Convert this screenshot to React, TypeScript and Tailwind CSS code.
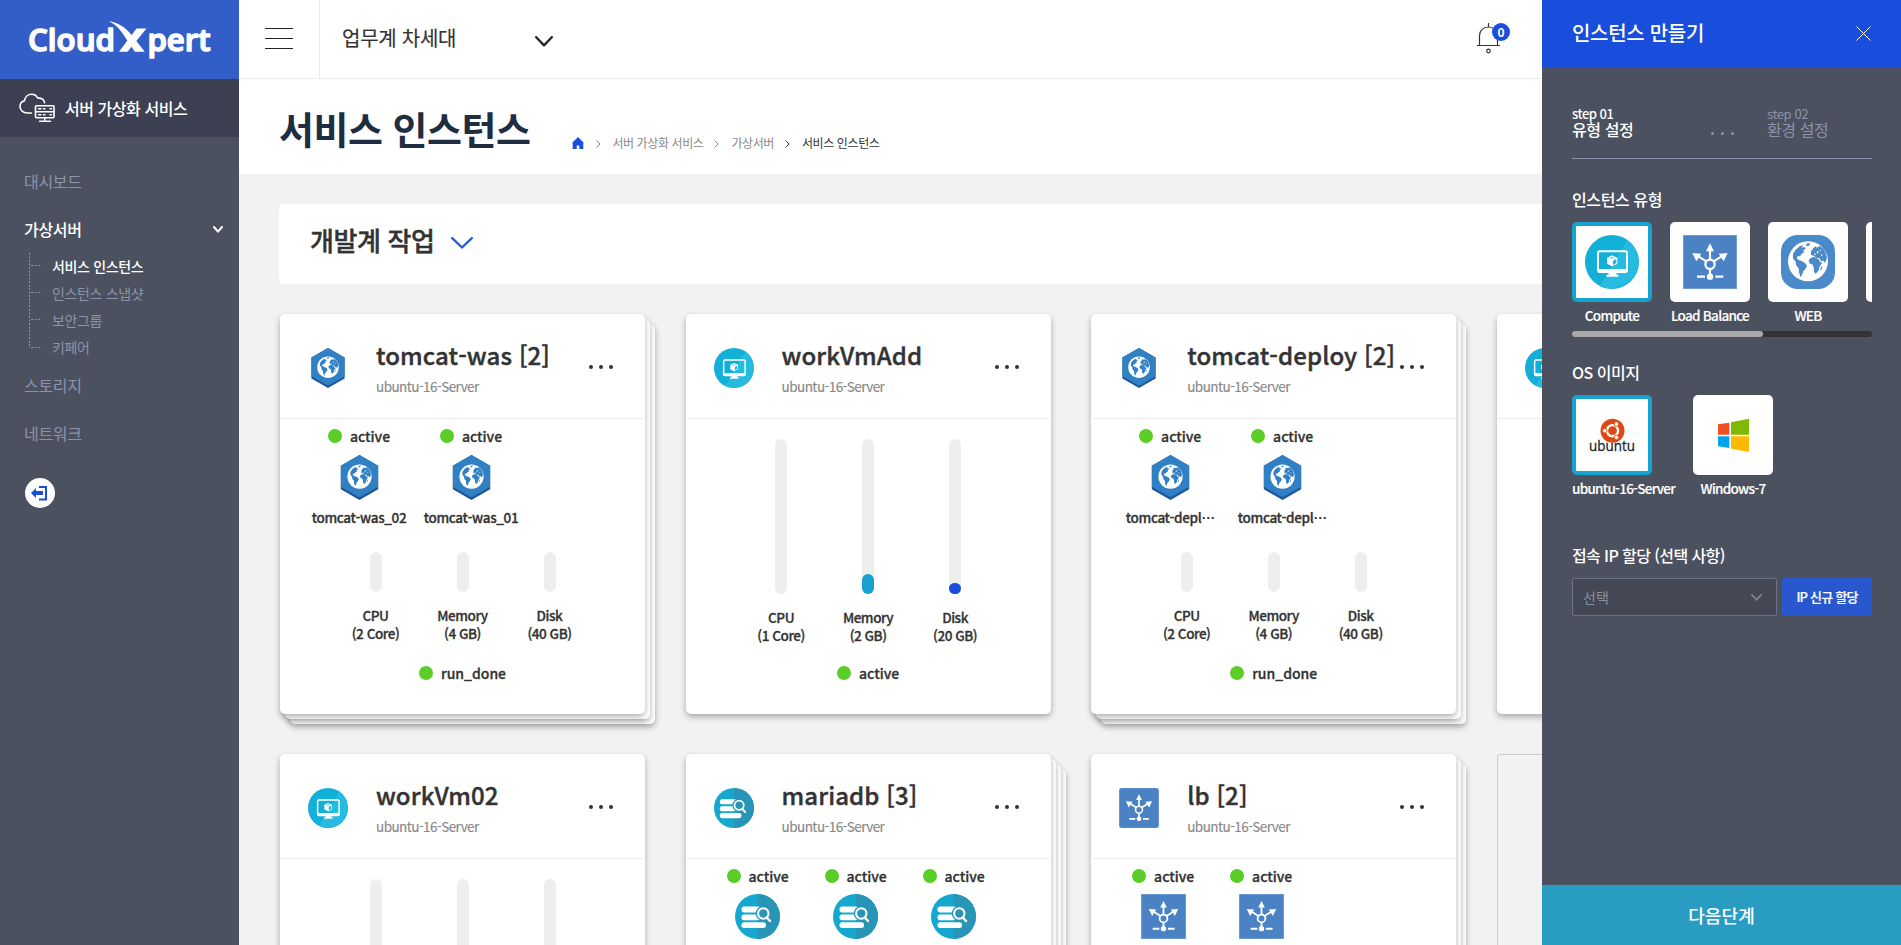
import React from "react";

type Kind = "was" | "compute" | "db" | "lb";

interface Member {
  label: string;
}

interface Instance {
  kind: Kind;
  name: string;
  stack: number;
  members?: Member[];
  memberWidth?: string;
  cpu: string;
  memory: string;
  disk: string;
  memoryUse?: number;
  diskUse?: number;
  status: string;
}

const instances: Instance[] = [
  { kind: "was", name: "tomcat-was [2]", stack: 2, memberWidth: "w-[94px]", members: [{ label: "tomcat-was_02" }, { label: "tomcat-was_01" }], cpu: "2 Core", memory: "4 GB", disk: "40 GB", status: "run_done" },
  { kind: "compute", name: "workVmAdd", stack: 0, cpu: "1 Core", memory: "2 GB", disk: "20 GB", memoryUse: 20, diskUse: 11, status: "active" },
  { kind: "was", name: "tomcat-deploy [2]", stack: 2, memberWidth: "w-[94px]", members: [{ label: "tomcat-depl⋯" }, { label: "tomcat-depl⋯" }], cpu: "2 Core", memory: "4 GB", disk: "40 GB", status: "run_done" },
  { kind: "compute", name: "workVm03", stack: 0, cpu: "1 Core", memory: "2 GB", disk: "20 GB", status: "active" },
  { kind: "compute", name: "workVm02", stack: 0, cpu: "1 Core", memory: "2 GB", disk: "20 GB", status: "active" },
  { kind: "db", name: "mariadb [3]", stack: 3, memberWidth: "w-20", members: [{ label: "mariadb_03" }, { label: "mariadb_02" }, { label: "mariadb_01" }], cpu: "2 Core", memory: "4 GB", disk: "40 GB", status: "run_done" },
  { kind: "lb", name: "lb [2]", stack: 2, memberWidth: "w-20", members: [{ label: "lb_02" }, { label: "lb_01" }], cpu: "2 Core", memory: "4 GB", disk: "40 GB", status: "run_done" },
];

function Continents({ color }: { color: string }) {
  return (
    <g fill={color}>
      <path d="M36 56 L44 44 L56 34 L66 30 L62 38 L70 36 L74 42 L66 46 L70 52 L62 56 L57 64 L50 64 L47 70 L53 75 L62 78 L72 84 L78 92 L74 101 L67 108 L63 120 L59 127 L54 112 L53 100 L45 90 L44 80 L36 70 Z" />
      <path d="M76 26 L88 24 L84 32 L76 34 Z" />
      <path d="M92 46 L98 38 L104 34 L108 38 L116 33 L126 40 L134 54 L138 70 L132 84 L126 76 L121 80 L116 70 L106 68 L98 62 L90 60 L90 52 Z" />
      <path d="M90 68 L100 66 L112 72 L118 82 L124 84 L116 94 L113 106 L104 116 L99 110 L98 96 L94 88 L86 86 L83 76 Z" />
      <path d="M120 96 L124 92 L122 104 L118 106 Z" />
    </g>
  );
}

function ContinentHoles({ color }: { color: string }) {
  return (
    <g fill={color}>
      <circle cx="110" cy="52" r="3" />
      <circle cx="122" cy="60" r="2.4" />
      <circle cx="102" cy="58" r="2.4" />
      <circle cx="118" cy="46" r="2" />
    </g>
  );
}

function WasIcon({ size }: { size: number }) {
  return (
    <svg width={size} height={size} viewBox="0 0 135 135">
      <path d="M67.5 0 L123.500 32 V103 L67.500 135 L11.500 103 V32 Z" fill="#1f559f" />
      <path d="M67.5 0 L123.500 32 V95 L67.500 127 L11.500 95 V32 Z" fill="#3180c4" />
      <g transform="translate(18.500 17) scale(0.605)">
        <circle cx="81" cy="79" r="60" fill="#fff" />
        <Continents color="#3180c4" />
        <ContinentHoles color="#fff" />
      </g>
    </svg>
  );
}

function WebIcon({ size }: { size: number }) {
  return (
    <svg width={size} height={size} viewBox="0 0 162 162">
      <rect width="162" height="162" rx="50" fill="#4a8aca" />
      <circle cx="81" cy="79" r="60" fill="#fff" />
      <Continents color="#4a8aca" />
      <ContinentHoles color="#fff" />
    </svg>
  );
}

function ComputeIcon({ size }: { size: number }) {
  return (
    <svg width={size} height={size} viewBox="0 0 162 162">
      <circle cx="81" cy="81" r="81" fill="#12afd9" />
      <path d="M127 15 A81 81 0 0 1 44 153 Z" fill="#26bbe1" />
      <rect x="39" y="49" width="87" height="62" rx="5" fill="none" stroke="#fff" strokeWidth="6" />
      <rect x="39" y="102" width="87" height="10" fill="#fff" />
      <path d="M72 111 H93 L95 119 H100 V125 H65 V119 H70 Z" fill="#fff" />
      <path d="M81 61 L97 68 V86 L81 94 L66 86 V68 Z" fill="#fff" />
      <path d="M84 77 L94 72 V84 L84 90 Z" fill="#1cb5dd" />
      <path d="M70 68 L81 63.500 L92 68 L81 73 Z" fill="#9fdff0" />
    </svg>
  );
}

function DbIcon({ size }: { size: number }) {
  return (
    <svg width={size} height={size} viewBox="0 0 45 45">
      <circle cx="22.5" cy="22.5" r="22.500" fill="#16a7cf" />
      <path d="M22.500 0 A22.500 22.500 0 0 1 22.500 45 Z" fill="#2995b6" />
      <g fill="#fff">
        <rect x="6.500" y="12.600" width="19" height="5.800" rx="2.700" />
        <rect x="6.500" y="20.400" width="19" height="5.800" rx="2.700" />
        <rect x="6.500" y="28.200" width="24.500" height="5.800" rx="2.700" />
      </g>
      <circle cx="28.300" cy="19.500" r="7.600" fill="#2196ba" />
      <circle cx="28.300" cy="19.500" r="5.200" fill="#2995b6" stroke="#fff" strokeWidth="2" />
      <path d="M31.800 23.500 L35 27" stroke="#fff" strokeWidth="2.400" strokeLinecap="round" />
    </svg>
  );
}

function LbIcon({ size, radius = 0 }: { size: number; radius?: number }) {
  return (
    <svg width={size} height={size} viewBox="0 0 162 162">
      <rect x="0.500" y="0.500" width="161" height="161" rx={radius} fill="#4a82c4" stroke="#7ba4d6" strokeWidth="2" />
      <g stroke="#fff" strokeWidth="6.500" fill="none">
        <circle cx="81" cy="88" r="14" />
        <path d="M81 74 V42 M70 79 L46 64 M92 79 L116 64 M81 102 V120" />
        <path d="M42 125 H66 M97 125 H121" />
      </g>
      <g fill="#fff">
        <path d="M81 25 L93 49 H69 Z" />
        <path d="M28 54 L55 56 L40 79 Z" />
        <path d="M134 54 L107 56 L122 79 Z" />
        <circle cx="81" cy="125" r="9.500" />
      </g>
    </svg>
  );
}

function KindIcon({ kind, size, header }: { kind: Kind; size: number; header?: boolean }) {
  if (kind === "was") return <WasIcon size={size} />;
  if (kind === "compute") return <ComputeIcon size={size} />;
  if (kind === "db") return <DbIcon size={size} />;
  return <LbIcon size={size} radius={header ? 12 : 0} />;
}

function Chevron({ w, h, stroke, className }: { w: number; h: number; stroke: number; className?: string }) {
  return (
    <svg width={w} height={h} viewBox={`0 0 ${w} ${h}`} className={className} fill="none" stroke="currentColor" strokeWidth={stroke} strokeLinecap="round" strokeLinejoin="round">
      <path d={`M${stroke / 2} ${stroke / 2} L${w / 2} ${h - stroke / 2 - 0.3} L${w - stroke / 2} ${stroke / 2}`} />
    </svg>
  );
}

function Dots() {
  return (
    <div className="flex gap-[6px]">
      <i className="size-1 rounded-full bg-[#333]" />
      <i className="size-1 rounded-full bg-[#333]" />
      <i className="size-1 rounded-full bg-[#333]" />
    </div>
  );
}

function Status({ text }: { text: string }) {
  return (
    <div className="flex h-[18px] items-center justify-center gap-2">
      <i className="size-3.5 shrink-0 rounded-full bg-[#5bcd27]" />
      <span className="text-[14px] leading-[18px] font-medium [-webkit-text-stroke:0.3px]">{text}</span>
    </div>
  );
}

function Meter({ tall, use, fill, title, amount }: { tall: boolean; use?: number; fill: string; title: string; amount: string }) {
  return (
    <div className="flex w-[87px] flex-col items-center">
      <div className={tall ? "flex h-[155px] w-3 flex-col justify-end rounded-full bg-[#eee]" : "flex h-10 w-3 flex-col justify-end rounded-full bg-[#eee]"}>
        {use ? <div className={fill} style={{ height: use }} /> : null}
      </div>
      <div className="mt-[14px] text-center text-[13.5px] leading-[18px] font-medium tracking-[-0.45px] whitespace-nowrap [-webkit-text-stroke:0.3px]">
        {title}
        <br />({amount})
      </div>
    </div>
  );
}

const layerOffsets = [
  "absolute inset-0 translate-x-[15px] translate-y-[15px] rounded-[5px] bg-white shadow-[0_3px_6px_rgba(0,0,0,0.3)]",
  "absolute inset-0 translate-x-[10px] translate-y-[10px] rounded-[5px] bg-white shadow-[0_3px_6px_rgba(0,0,0,0.3)]",
  "absolute inset-0 translate-x-[5px] translate-y-[5px] rounded-[5px] bg-white shadow-[0_3px_6px_rgba(0,0,0,0.3)]",
];

function Card({ item }: { item: Instance }) {
  const grouped = Boolean(item.members);
  return (
    <article className="relative h-[400px] w-[365px] shrink-0">
      {layerOffsets.slice(3 - item.stack).map((c) => (
        <div key={c} className={c} />
      ))}
      <div className="relative flex h-full flex-col rounded-[5px] bg-white px-px shadow-[0_3px_6px_rgba(0,0,0,0.3)]">
        <header className="flex h-[105px] shrink-0 border-b border-[#ebebeb] pr-[30px] pl-[27px]">
          <div className="mt-[34px] size-10">
            <KindIcon kind={item.kind} size={40} header />
          </div>
          <div className="mt-6 ml-7 w-[213px] whitespace-nowrap">
            <h3 className="text-2xl leading-[34px] font-medium tracking-[0.1px] [-webkit-text-stroke:0.4px]">{item.name}</h3>
            <p className="mt-[4px] text-[13.5px] leading-5 tracking-[-0.55px] text-[#888] [-webkit-text-stroke:0.15px]">ubuntu-16-Server</p>
          </div>
          <div className="mt-[51px]">
            <Dots />
          </div>
        </header>
        {grouped ? (
          <div className="mt-2 flex h-[93px] gap-[18px] pl-[31px]">
            {item.members!.map((m, i) => (
              <div key={i} className={`flex flex-col items-center ${item.memberWidth}`}>
                <Status text="active" />
                <div className={item.kind === "was" ? "mt-[10px] h-[45px]" : "mt-[9px] h-[46px]"}>
                  <KindIcon kind={item.kind} size={45} />
                </div>
                <span className="mt-[7px] text-[13.5px] leading-5 font-medium tracking-[-0.33px] whitespace-nowrap [-webkit-text-stroke:0.3px]">{m.label}</span>
              </div>
            ))}
          </div>
        ) : null}
        <div className={grouped ? "mt-8 flex pl-[51px]" : "mt-5 flex pl-[51px]"}>
          <Meter tall={!grouped} fill="" title="CPU" amount={item.cpu} />
          <Meter tall={!grouped} use={item.memoryUse} fill="w-3 rounded-full bg-[#18a2cf]" title="Memory" amount={item.memory} />
          <Meter tall={!grouped} use={item.diskUse} fill="w-3 rounded-full bg-[#194ddb]" title="Disk" amount={item.disk} />
        </div>
        <div className={grouped ? "mt-[22px]" : "mt-5"}>
          <Status text={item.status} />
        </div>
      </div>
    </article>
  );
}

function Logo() {
  return (
    <svg width="239" height="79" viewBox="0 0 239 79">
      <g fill="#fff" stroke="#fff" strokeWidth="1.500" strokeLinejoin="round" strokeLinecap="round" fontFamily="Open Sans, Noto Sans, sans-serif" fontWeight="600" fontSize="30.500">
        <text x="28" y="50.500" textLength="87" lengthAdjust="spacingAndGlyphs">Cloud</text>
        <text x="147.500" y="50.500" textLength="63" lengthAdjust="spacingAndGlyphs">pert</text>
      </g>
      <path d="M108.500 21.200 C118 22 125.500 27.500 131.500 35 L144.800 51.800 H134.800 L125 37 C121 30.500 116 24 108.500 21.200 Z" fill="#fff" />
      <path d="M136.500 28.500 H146.500 L127.500 51.800 H119 Z" fill="#fff" />
    </svg>
  );
}

function CloudServerIcon() {
  return (
    <svg width="37" height="30" viewBox="0 0 37 30" fill="none" stroke="#fff" strokeWidth="1.600" strokeLinecap="round" strokeLinejoin="round">
      <path d="M12.500 20 H8.500 C4 20 1 17 1 13.500 C1 10.300 3 8.300 5.500 7.700 C6 3.800 9 1.200 12.500 1.200 C15.500 1.200 17.800 2.800 18.800 5.200 C22.500 4.700 25.300 6.800 25.500 9.800" />
      <rect x="16.500" y="12.800" width="18.500" height="12" rx="1" />
      <path d="M16.500 18.800 H35 M19.500 15.800 H22 M24.500 15.800 H26 M31 15.800 H32.500 M19.500 21.800 H22 M24.500 21.800 H26 M31 21.800 H32.500 M25.800 25 V28 M20.500 28.300 H31.500" strokeWidth="1.400" />
    </svg>
  );
}

const subItems = ["서비스 인스턴스", "인스턴스 스냅샷", "보안그룹", "키페어"];

function Sidebar() {
  return (
    <aside className="flex w-[239px] shrink-0 flex-col bg-[#4c515f]">
      <div className="h-[79px] bg-[#335ec7]">
        <Logo />
      </div>
      <div className="flex h-[58px] items-center bg-[#3c4052] pl-[19px] text-base font-medium tracking-[-0.45px] text-white">
        <CloudServerIcon />
        <span className="ml-[9px] leading-6">서버 가상화 서비스</span>
      </div>
      <nav className="flex flex-col pl-6 text-base leading-6 tracking-[-0.3px] text-[#8c93ab]">
        <a className="mt-8 h-6">대시보드</a>
        <a className="mt-6 flex h-6 items-center justify-between pr-4 font-medium text-white">
          가상서버
          <Chevron w={10} h={7} stroke={2} />
        </a>
        <ul className="mt-[12px] flex text-[14px] tracking-[-0.35px]">
          <svg width="14" height="96" viewBox="0 0 14 96" className="ml-[5px] shrink-0" stroke="#8c93ab" strokeDasharray="2 1.500" fill="none">
            <path d="M0.500 0 V95 M2 12.500 H13 M2 39.500 H13 M2 66.500 H13 M2 94.500 H13" />
          </svg>
          <div className="flex flex-col">
            {subItems.map((t, i) => (
              <li key={t} className={i === 0 ? "ml-[9px] h-[27px] leading-[27px] font-medium text-white" : "ml-[9px] h-[27px] leading-[27px]"}>
                {t}
              </li>
            ))}
          </div>
        </ul>
        <a className="mt-[12px] h-6">스토리지</a>
        <a className="mt-6 h-6">네트워크</a>
      </nav>
      <div className="mt-[33px] ml-[25px] flex size-[30px] items-center justify-center rounded-full bg-white">
        <svg width="18" height="18" viewBox="0 0 18 18">
          <path d="M8 2 H16 V16.500 H8 V14.500 H14 V4 H8 Z" fill="#194ddb" />
          <path d="M0 9 L5 4 V7 H12 V11 H5 V14 Z" fill="#194ddb" />
        </svg>
      </div>
    </aside>
  );
}

function CrumbArrow({ className }: { className: string }) {
  return (
    <svg width="5" height="8" viewBox="0 0 5 8" fill="none" stroke="currentColor" className={className}>
      <path d="M0.500 0.500 L4 4 L0.500 7.500" />
    </svg>
  );
}

function TopBar() {
  return (
    <div className="flex h-[79px] shrink-0 border-b border-[#ebebeb] bg-white">
      <div className="flex w-[81px] shrink-0 flex-col gap-[9px] border-r border-[#ebebeb] pt-7 pl-[26px]">
        <i className="h-px w-7 bg-[#222]" />
        <i className="h-px w-7 bg-[#222]" />
        <i className="h-px w-7 bg-[#222]" />
      </div>
      <div className="flex w-[233px] items-center justify-between pb-[2px] pl-[22px] text-xl tracking-[-0.25px] [-webkit-text-stroke:0.15px]">
        업무계 차세대
        <Chevron w={18} h={11} stroke={2.5} className="mt-[6px] text-[#2b2b2b]" />
      </div>
      <div className="relative mt-[23px] ml-auto h-[31px] w-[65px]">
        <svg width="24" height="31" viewBox="0 0 24 31" fill="none" stroke="#333" strokeWidth="1.200">
          <path d="M11.500 0 V4 M2.500 22 V12.500 C2.500 7.500 6.500 4 11.500 4 C16.500 4 20.500 7.500 20.500 12.500 V22 M0 22.500 H23" />
          <circle cx="11.500" cy="28" r="1.800" />
        </svg>
        <span className="absolute top-0 left-[15px] flex size-[18px] items-center justify-center rounded-full bg-[#194ddb] text-[12px] leading-[18px] font-bold text-white">0</span>
      </div>
    </div>
  );
}

function PageTitle() {
  return (
    <div className="flex h-[95px] shrink-0 bg-white pl-10">
      <h1 className="mt-[22px] h-[54px] text-[38px] leading-[54px] font-bold tracking-[-0.5px] whitespace-nowrap text-[#1f2d42]">서비스 인스턴스</h1>
      <div className="mt-[55px] ml-[42px] flex h-[18px] items-center text-[12px] tracking-[-0.4px] whitespace-nowrap text-[#888]">
        <svg width="12" height="12" viewBox="0 0 12 12">
          <path d="M6 0 L12 6 H11.300 V12 H7.300 V8.500 H4.700 V12 H0.700 V6 H0 Z" fill="#194ddb" />
        </svg>
        <CrumbArrow className="mt-[2px] ml-[12px]" />
        <span className="ml-[11px]">서버 가상화 서비스</span>
        <CrumbArrow className="mt-[2px] ml-[11px]" />
        <span className="ml-3">가상서버</span>
        <CrumbArrow className="mt-[2px] ml-[11px] text-[#333]" />
        <span className="ml-3 text-[#333]">서비스 인스턴스</span>
      </div>
    </div>
  );
}

function Tile({ label, selected, children, width }: { label: string; selected?: boolean; children: React.ReactNode; width?: string }) {
  return (
    <div className={width ?? "w-20 shrink-0"}>
      <div className={selected ? "flex size-20 items-center justify-center rounded-[5px] border-4 border-[#18a2cf] bg-white" : "flex size-20 items-center justify-center rounded-[5px] bg-white"}>
        {children}
      </div>
      <div className="mt-[3px] text-center text-[13.5px] leading-5 font-medium tracking-[-0.72px] whitespace-nowrap text-white [-webkit-text-stroke:0.15px]">{label}</div>
    </div>
  );
}

function CreatePanel() {
  return (
    <section className="flex w-[359px] shrink-0 flex-col bg-[#4c515f] text-white">
      <header className="flex h-[68px] items-center justify-between bg-[#194ddb] pr-[30px] pb-[2px] pl-[30px]">
        <h2 className="text-xl font-medium tracking-[-0.3px]">인스턴스 만들기</h2>
        <svg width="15" height="15" viewBox="0 0 15 15" stroke="#fff" strokeWidth="1">
          <path d="M0.500 0.500 L14.500 14.500 M14.500 0.500 L0.500 14.500" />
        </svg>
      </header>
      <div className="flex flex-1 flex-col px-[30px] pr-[29px]">
        <div className="flex h-[91px] border-b border-[#8a91a8]">
          <div className="mt-[38px] w-[139px] font-medium">
            <div className="h-[15px] text-[13px] leading-[15px] tracking-[-0.5px]">step 01</div>
            <div className="mt-px text-base leading-[15px] tracking-[-0.4px]">유형 설정</div>
          </div>
          <div className="mt-[64px] flex w-14 gap-[7px]">
            <i className="size-[3px] rounded-full bg-[#8c93ab]" />
            <i className="size-[3px] rounded-full bg-[#8c93ab]" />
            <i className="size-[3px] rounded-full bg-[#8c93ab]" />
          </div>
          <div className="mt-[38px] text-[#8c93ab]">
            <div className="h-[15px] text-[13px] leading-[15px] tracking-[-0.4px]">step 02</div>
            <div className="mt-px text-base leading-[15px] tracking-[-0.4px]">환경 설정</div>
          </div>
        </div>
        <h4 className="mt-[28px] text-base leading-6 font-medium tracking-[-0.4px]">인스턴스 유형</h4>
        <div className="mt-[11px] flex h-[109px] w-[300px] gap-[18px] overflow-hidden">
          <Tile label="Compute" selected>
            <ComputeIcon size={54} />
          </Tile>
          <Tile label="Load Balance">
            <LbIcon size={54} />
          </Tile>
          <Tile label="WEB">
            <WebIcon size={54} />
          </Tile>
          <Tile label="WAS">
            <WasIcon size={54} />
          </Tile>
        </div>
        <div className="h-[6px] w-[300px] rounded-full bg-[#333]">
          <div className="h-full w-[191px] rounded-full bg-[#a9a9a9]" />
        </div>
        <h4 className="mt-[23px] text-base leading-6 font-medium tracking-[-0.5px]">OS 이미지</h4>
        <div className="mt-[11px] flex gap-[18px]">
          <Tile label="ubuntu-16-Server" selected width="w-[103px]">
            <svg width="72" height="72" viewBox="0 0 72 72">
              <circle cx="36.500" cy="31.700" r="12" fill="#dd4814" />
              <circle cx="36.500" cy="31.700" r="5.600" fill="none" stroke="#fff" strokeWidth="2.400" />
              <g fill="#fff" stroke="#dd4814" strokeWidth="0.900">
                <circle cx="28.800" cy="31.700" r="2.300" />
                <circle cx="40.400" cy="25" r="2.300" />
                <circle cx="40.400" cy="38.400" r="2.300" />
              </g>
              <text x="13" y="52" textLength="46" lengthAdjust="spacingAndGlyphs" fontSize="15" fontFamily="Open Sans, Noto Sans, sans-serif" fill="#222" stroke="#222" strokeWidth="0.300">ubuntu</text>
            </svg>
          </Tile>
          <Tile label="Windows-7">
            <svg width="80" height="80" viewBox="0 0 240 240">
              <path d="M75 88 L109 83 V119 H75 Z" fill="#f25022" />
              <path d="M114 82 L168 71 V119 H114 Z" fill="#7fba00" />
              <path d="M75 124 H109 V159 L75 154 Z" fill="#00a4ef" />
              <path d="M114 124 H168 V171 L114 161 Z" fill="#ffb900" />
            </svg>
          </Tile>
        </div>
        <h4 className="mt-[45px] text-base leading-6 font-medium tracking-[-0.6px]">접속 IP 할당 (선택 사항)</h4>
        <div className="mt-[11px] flex h-[38px] gap-[5px]">
          <div className="flex w-[205px] items-center justify-between rounded-[2px] border border-[#6c7286] bg-[#444854] pr-[14px] pl-[10px] text-[14px] text-[#8a8f9f]">
            선택
            <Chevron w={11} h={7} stroke={1.8} className="text-[#7b8191]" />
          </div>
          <button className="w-[90px] rounded-[2px] bg-[#2957cf] text-[13px] font-medium tracking-[-0.8px] whitespace-nowrap [-webkit-text-stroke:0.2px]">IP 신규 할당</button>
        </div>
      </div>
      <footer className="flex h-[60px] items-center justify-center bg-[#299cc2] text-lg font-medium tracking-[0.1px]">다음단계</footer>
    </section>
  );
}

export default function App() {
  return (
    <div lang="ko" className="flex h-[945px] w-full overflow-hidden bg-[#f2f2f2] font-['Noto_Sans_CJK_KR',sans-serif] text-[#333]">
      <Sidebar />
      <main className="flex min-w-0 flex-1 flex-col overflow-hidden">
        <TopBar />
        <PageTitle />
        <div className="mt-[30px] ml-10 flex h-20 w-[1583px] shrink-0 rounded-[5px] bg-white pl-[31px]">
          <h2 className="mt-[17px] text-[26px] leading-[38px] font-medium tracking-[-0.4px] whitespace-nowrap [-webkit-text-stroke:0.4px]">개발계 작업</h2>
          <Chevron w={22} h={12} stroke={2.4} className="mt-[33px] ml-[17px] text-[#2a5bd7]" />
        </div>
        <div className="mt-[30px] ml-[41px] flex w-[1583px] shrink-0 flex-wrap gap-x-[40.6px] gap-y-10">
          {instances.map((it) => (
            <Card key={it.name} item={it} />
          ))}
          <div className="h-[400px] w-[365px] shrink-0 rounded-[3px] border border-[#ccc]" />
        </div>
      </main>
      <CreatePanel />
    </div>
  );
}
